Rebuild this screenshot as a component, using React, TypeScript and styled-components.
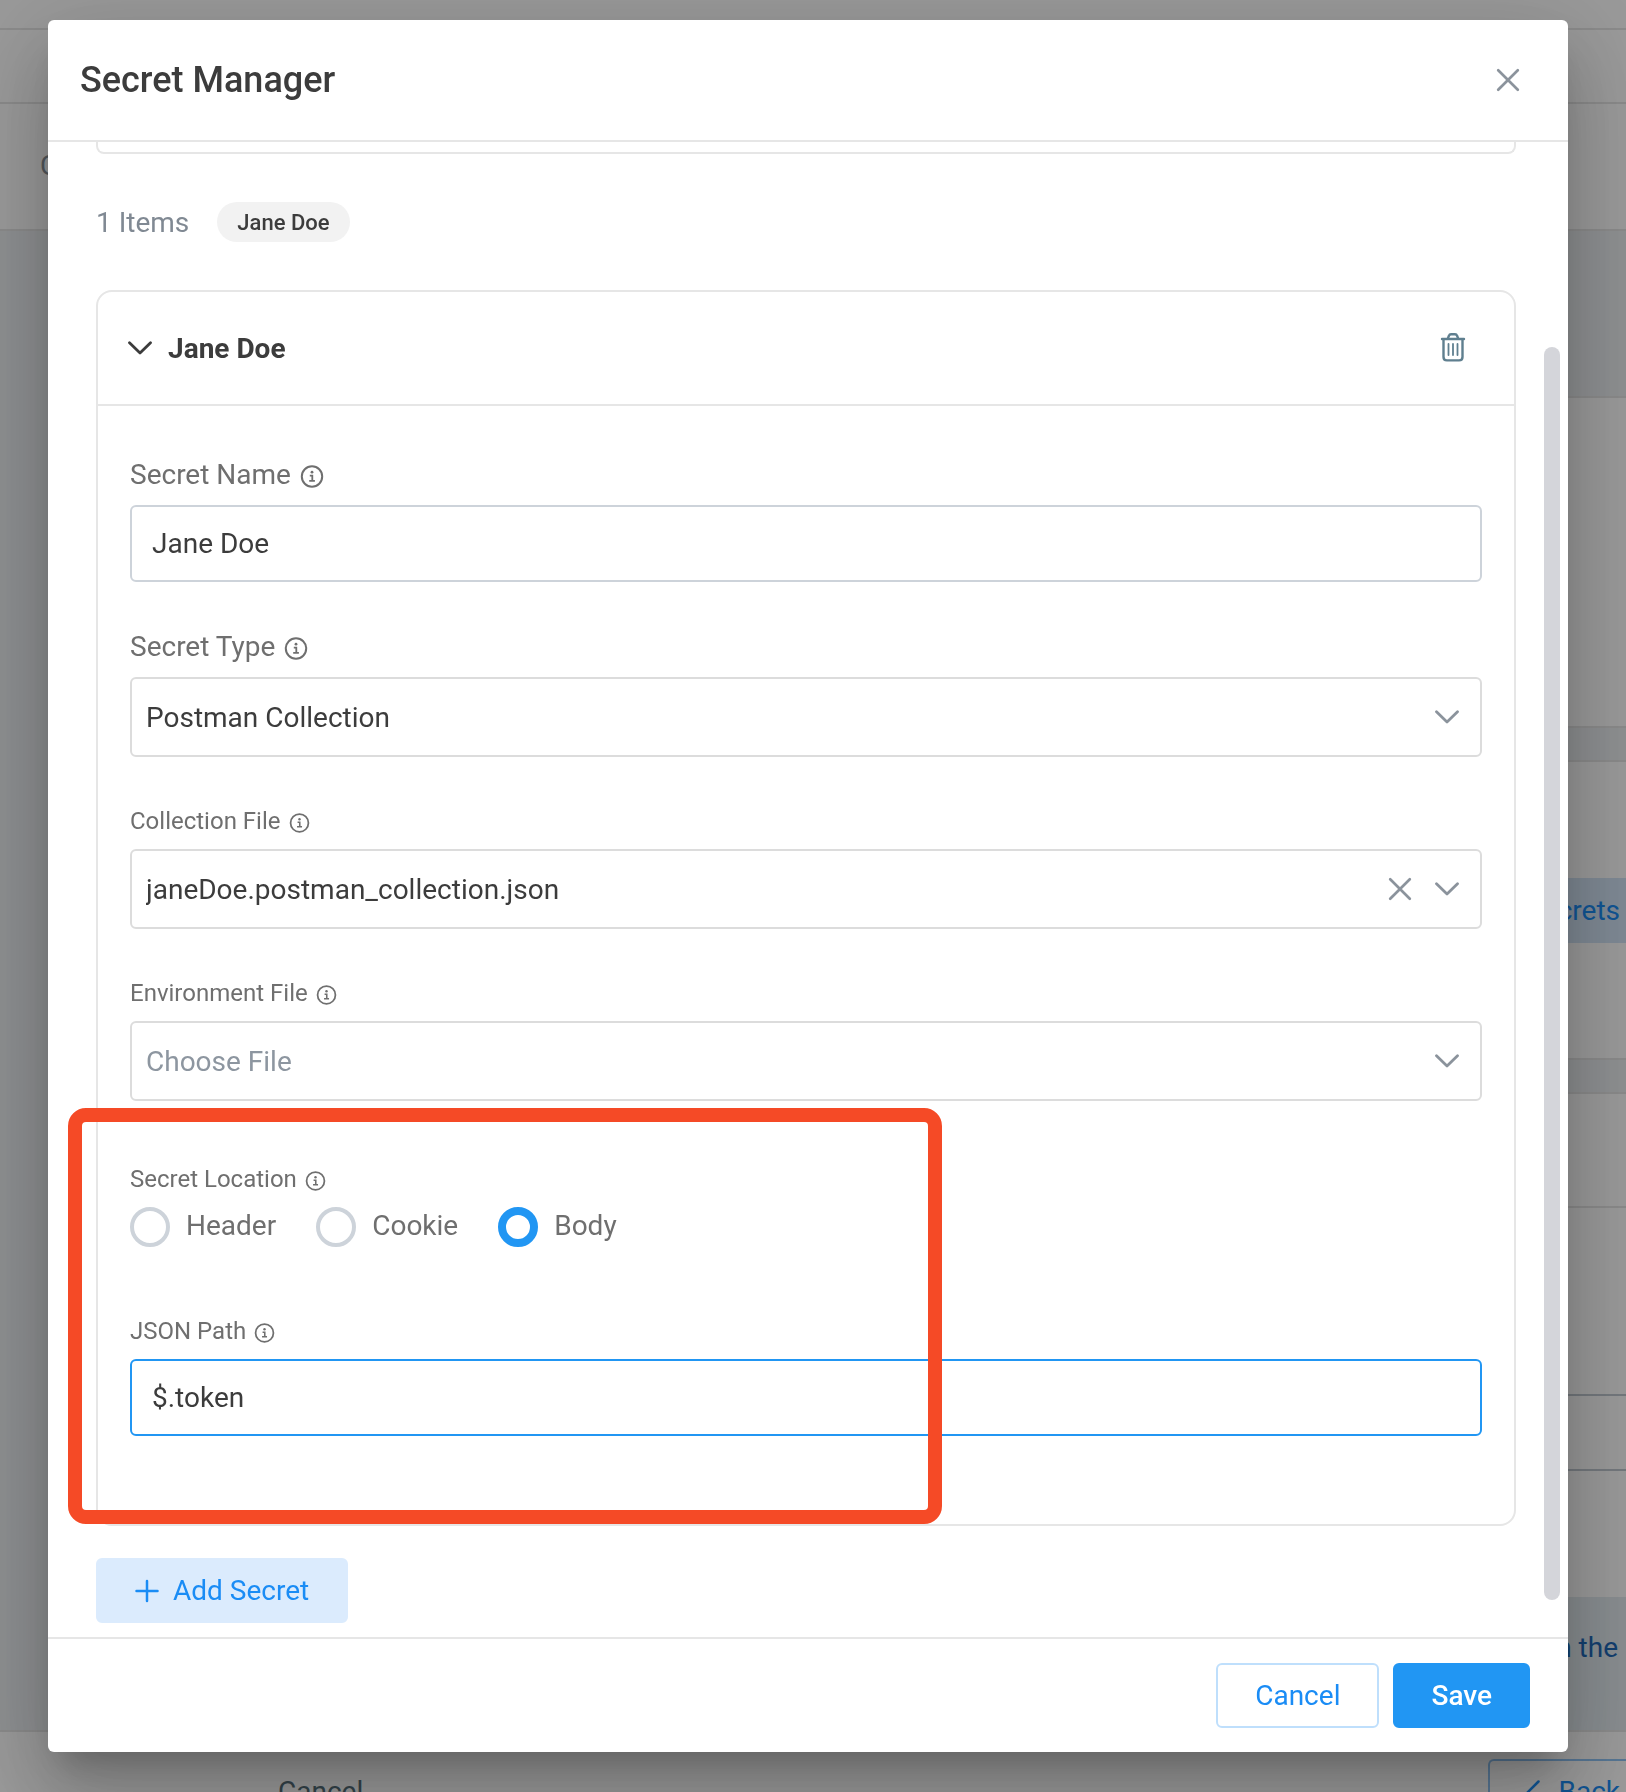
import React, { useId, useState } from "react";
import styled, { createGlobalStyle, css } from "styled-components";

const color = {
  text: "#3c3c3c",
  label: "#6f6f6f",
  muted: "#808993",
  icon: "#8b939c",
  line: "#e6e6e6",
  control: "#dcdcdc",
  input: "#cdd3da",
  blue: "#2196f3",
  link: "#1a8cf5",
  soft: "#dbebfd",
};

const GlobalStyle = createGlobalStyle`
  *, *::before, *::after { box-sizing: border-box; }
  body { margin: 0; background: #fff; }
  body, button, input, select { font-family: Roboto, "Liberation Sans", sans-serif; font-size: 28px; }
  button { cursor: pointer; }
`;

/* ---------- page behind the dialog ---------- */

const Page = styled.div`
  display: flex;
  flex-direction: column;
  height: 100vh;
  overflow: hidden;
  background: #fff;
`;

const Strip = styled.div<{ $height: number }>`
  display: flex;
  align-items: center;
  flex: none;
  height: ${(p) => p.$height}px;
  padding: 0 0 3px 40px;
  border-bottom: 2px solid ${color.line};
  color: #8a9299;
`;

const Workspace = styled.div`
  display: flex;
  flex-direction: column;
  flex: 1;
  gap: 32px;
  min-height: 0;
  padding: 165px 0 0 96px;
  background: #eceff2;
`;

const Panel = styled.section<{ $height?: number }>`
  display: flex;
  flex-direction: column;
  height: ${(p) => (p.$height ? `${p.$height}px` : "auto")};
  flex: ${(p) => (p.$height ? "none" : "1")};
  justify-content: ${(p) => (p.$height ? "center" : "flex-start")};
  border: solid ${color.line};
  border-width: 2px 0 ${(p) => (p.$height ? "2px" : "0")};
  background: #fff;
`;

const TabRow = styled.div`
  display: flex;
  justify-content: flex-end;
`;

const Tab = styled.button`
  height: 65px;
  padding: 0 6px 0 40px;
  border: 0;
  background: #d3e4f6;
  color: ${color.link};
`;

const PanelHead = styled.div`
  height: 114px;
  border-bottom: 2px solid ${color.line};
`;

const PageInput = styled.input`
  height: 77px;
  margin-top: 186px;
  border: solid #c0c8d0;
  border-width: 2px 0;
  background: transparent;
`;

const Callout = styled.p`
  display: flex;
  flex: 1;
  justify-content: flex-end;
  margin: 126px 0 0;
  padding: 35px 8px 0 0;
  line-height: 32px;
  background: #e3ebf0;
  color: #1f69b8;
`;

const PageFooter = styled.footer`
  display: flex;
  flex: none;
  justify-content: space-between;
  height: 62px;
  padding: 27px 0 0 278px;
  border-top: 2px solid ${color.line};
  overflow: hidden;
`;

const PageButton = styled.button<{ $outlined?: boolean }>`
  display: flex;
  align-items: center;
  gap: 18px;
  flex: none;
  height: 65px;
  padding: 0;
  border: 0;
  background: none;
  color: #546e7a;
  ${(p) =>
    p.$outlined &&
    css`
      padding: 0 6px 0 36px;
      border: 2px solid #90c4f5;
      border-right: 0;
      border-radius: 6px 0 0 6px;
      color: ${color.link};
    `}
`;

/* ---------- dialog shell ---------- */

const Overlay = styled.div`
  position: fixed;
  inset: 0;
  display: flex;
  padding: 20px 58px 40px 48px;
  background: rgba(0, 0, 0, 0.4);
`;

const Dialog = styled.div`
  display: flex;
  flex-direction: column;
  flex: 1;
  min-width: 0;
  border-radius: 6px;
  background: #fff;
  color: ${color.text};
  box-shadow: 0 22px 30px -14px rgba(0, 0, 0, 0.2), 0 48px 76px 6px rgba(0, 0, 0, 0.14),
    0 18px 92px 16px rgba(0, 0, 0, 0.12);
`;

const DialogHeader = styled.header`
  display: flex;
  align-items: center;
  justify-content: space-between;
  flex: none;
  height: 122px;
  padding: 0 48px 0 32px;
  border-bottom: 2px solid ${color.line};
`;

const Title = styled.h1`
  margin: 0;
  font-size: 36px;
  font-weight: 500;
  line-height: 44px;
`;

const IconButton = styled.button<{ $tint?: string }>`
  display: flex;
  padding: 0;
  border: 0;
  background: none;
  color: ${(p) => p.$tint || color.icon};
`;

const DialogBody = styled.div`
  position: relative;
  display: flex;
  flex-direction: column;
  flex: 1;
  min-height: 0;
  padding: 0 52px 0 48px;
  overflow: hidden;
`;

const ScrollThumb = styled.div`
  position: absolute;
  top: 205px;
  right: 8px;
  bottom: 37px;
  width: 16px;
  border-radius: 8px;
  background: #d4d5da;
`;

const DialogFooter = styled.footer`
  display: flex;
  align-items: center;
  justify-content: flex-end;
  flex: none;
  gap: 14px;
  height: 115px;
  padding-right: 38px;
  border-top: 2px solid ${color.line};
`;

const Button = styled.button<{ $kind: "solid" | "outline" | "soft" }>`
  display: flex;
  align-items: center;
  align-self: ${(p) => (p.$kind === "soft" ? "flex-start" : "auto")};
  flex: none;
  gap: 14px;
  height: 65px;
  padding: 0 ${(p) => (p.$kind === "solid" ? 36 : 37)}px;
  border: 2px solid
    ${(p) => ({ solid: color.blue, outline: "#bfdffc", soft: color.soft })[p.$kind]};
  border-radius: 6px;
  background: ${(p) => ({ solid: color.blue, outline: "#fff", soft: color.soft })[p.$kind]};
  color: ${(p) => (p.$kind === "solid" ? "#fff" : color.link)};
  font-weight: ${(p) => (p.$kind === "solid" ? 500 : 400)};
`;

/* ---------- dialog content ---------- */

const PreviousCard = styled.div`
  flex: none;
  height: 12px;
  border: 2px solid ${color.line};
  border-top: 0;
  border-radius: 0 0 8px 8px;
`;

const Summary = styled.div`
  display: flex;
  align-items: center;
  flex: none;
  gap: 28px;
  margin: 48px 0;
  color: ${color.muted};
`;

const Chip = styled.span`
  height: 40px;
  padding: 0 20px;
  border-radius: 20px;
  background: #f2f2f2;
  color: ${color.text};
  font-size: 22px;
  font-weight: 500;
  line-height: 42px;
`;

const Card = styled.section`
  flex: none;
  margin-bottom: 32px;
  border: 2px solid ${color.line};
  border-radius: 16px;
`;

const CardHeader = styled.div`
  display: flex;
  align-items: center;
  justify-content: space-between;
  height: 114px;
  padding: 0 48px 0 30px;
  border-bottom: 2px solid ${color.line};
`;

const CardToggle = styled.button`
  display: flex;
  align-items: center;
  gap: 16px;
  padding: 0;
  border: 0;
  background: none;
  color: ${color.text};
  font-weight: 700;
`;

const CardForm = styled.form`
  display: flex;
  flex-direction: column;
  gap: 44px;
  padding: 48px 32px 88px;
`;

const Field = styled.div`
  display: flex;
  flex-direction: column;
  gap: 8px;
`;

const LabelRow = styled.div<{ $small?: boolean }>`
  display: flex;
  align-items: center;
  gap: ${(p) => (p.$small ? 8 : 9)}px;
  padding-bottom: ${(p) => (p.$small ? 0 : 2)}px;
  color: ${color.label};
  font-size: ${(p) => (p.$small ? 24 : 28)}px;
  line-height: ${(p) => (p.$small ? 40 : 41)}px;

  svg {
    width: ${(p) => (p.$small ? 21 : 24)}px;
    height: auto;
    margin-top: 2px;
  }
`;

const TextInput = styled.input<{ $active?: boolean }>`
  width: 100%;
  height: 77px;
  padding: 0 20px;
  border: 2px solid ${(p) => (p.$active ? color.blue : color.input)};
  border-radius: 6px;
  outline: 0;
  background: #fff;
  color: ${color.text};
`;

const SelectShell = styled.div`
  display: grid;
  align-items: center;

  > * {
    grid-area: 1 / 1;
  }
`;

const Select = styled.select<{ $empty?: boolean }>`
  width: 100%;
  height: 80px;
  padding: 0 120px 0 14px;
  appearance: none;
  border: 2px solid ${color.control};
  border-radius: 6px;
  outline: 0;
  background: #fff;
  color: ${(p) => (p.$empty ? "#8d96a0" : color.text)};
`;

const SelectIcons = styled.div`
  display: flex;
  align-items: center;
  justify-self: end;
  gap: 23px;
  padding-right: 23px;
  color: ${color.icon};
  pointer-events: none;

  button {
    pointer-events: auto;
  }
`;

const HighlightGroup = styled.div`
  position: relative;
  display: flex;
  flex-direction: column;
  gap: 64px;
  padding-top: 14px;

  &::after {
    content: "";
    position: absolute;
    top: -37px;
    bottom: -88px;
    left: -62px;
    width: 874px;
    border: 14px solid #f54a26;
    border-radius: 18px;
    pointer-events: none;
  }
`;

const RadioRow = styled.div`
  display: flex;
  gap: 40px;
`;

const RadioLabel = styled.label`
  display: flex;
  align-items: flex-start;
  gap: 16px;
  color: ${color.label};
  line-height: 38px;
`;

const Radio = styled.input`
  width: 40px;
  height: 40px;
  margin: 0;
  appearance: none;
  border: 4px solid #cdd3da;
  border-radius: 50%;

  &:checked {
    border: 8px solid ${color.blue};
  }
`;

/* ---------- icons ---------- */

const CloseIcon = () => (
  <svg width="24" height="24" viewBox="0 0 24 24" fill="none" stroke="currentColor" strokeWidth="2.7" strokeLinecap="round" aria-hidden="true">
    <path d="M2.2 2.2 L21.8 21.8 M21.8 2.2 L2.2 21.8" />
  </svg>
);

const ChevronIcon = () => (
  <svg width="24" height="14" viewBox="0 0 24 14" fill="none" stroke="currentColor" strokeWidth="2.8" strokeLinecap="round" strokeLinejoin="round" aria-hidden="true">
    <path d="M1.5 1.8 L12 11.9 L22.5 1.8" />
  </svg>
);

const BackIcon = () => (
  <svg width="14" height="24" viewBox="0 0 14 24" fill="none" stroke="currentColor" strokeWidth="2.5" strokeLinecap="round" aria-hidden="true">
    <path d="M12.5 1.5 L2 12 L12.5 22.5" />
  </svg>
);

const PlusIcon = () => (
  <svg width="24" height="24" viewBox="0 0 24 24" fill="none" stroke="currentColor" strokeWidth="2.5" strokeLinecap="round" aria-hidden="true">
    <path d="M12 2 V22 M1.5 12 H22.5" />
  </svg>
);

const TrashIcon = () => (
  <svg width="26" height="32" viewBox="0 0 26 32" fill="none" stroke="currentColor" strokeWidth="2.4" strokeLinecap="round" strokeLinejoin="round" aria-hidden="true">
    <path d="M2 7 H24" />
    <path d="M7.8 6.6 L8.9 3.8 C9.3 2.7 10 2.3 11 2.3 H15 C16 2.3 16.7 2.7 17.1 3.8 L18.2 6.6" />
    <path d="M3.5 7.3 V25 Q3.5 28.4 6.9 28.4 H19.1 Q22.5 28.4 22.5 25 V7.3" />
    <path d="M8.5 12 V23 M13 12 V23 M17.5 12 V23" strokeWidth="1.8" />
  </svg>
);

const InfoIcon = () => (
  <svg viewBox="0 0 24 24" fill="none" stroke="currentColor" strokeWidth="2" aria-hidden="true">
    <circle cx="12" cy="12.5" r="10.2" />
    <circle cx="12" cy="8.2" r="1.4" fill="currentColor" stroke="none" />
    <path d="M9.8 11.7 H12.3 V16.9 M9.2 16.9 H14.9" strokeWidth="1.8" />
  </svg>
);

/* ---------- composed parts ---------- */

type SelectFieldProps = {
  label: string;
  value: string;
  small?: boolean;
  empty?: boolean;
  clearable?: boolean;
};

function SelectField({ label, value, small, empty, clearable }: SelectFieldProps) {
  const id = useId();
  return (
    <Field>
      <LabelRow $small={small}>
        <label htmlFor={id}>{label}</label>
        <InfoIcon />
      </LabelRow>
      <SelectShell>
        <Select id={id} $empty={empty} defaultValue={value}>
          <option>{value}</option>
        </Select>
        <SelectIcons>
          {clearable && (
            <IconButton type="button" aria-label="Clear">
              <CloseIcon />
            </IconButton>
          )}
          <ChevronIcon />
        </SelectIcons>
      </SelectShell>
    </Field>
  );
}

type TextFieldProps = { label: string; value: string; small?: boolean; active?: boolean };

function TextField({ label, value, small, active }: TextFieldProps) {
  const id = useId();
  return (
    <Field>
      <LabelRow $small={small}>
        <label htmlFor={id}>{label}</label>
        <InfoIcon />
      </LabelRow>
      <TextInput id={id} type="text" defaultValue={value} $active={active} />
    </Field>
  );
}

function LocationField() {
  const [location, setLocation] = useState("Body");
  const id = useId();
  return (
    <Field role="radiogroup" aria-labelledby={id}>
      <LabelRow $small>
        <span id={id}>Secret Location</span>
        <InfoIcon />
      </LabelRow>
      <RadioRow>
        {["Header", "Cookie", "Body"].map((name) => (
          <RadioLabel key={name}>
            <Radio
              type="radio"
              name="location"
              checked={location === name}
              onChange={() => setLocation(name)}
            />
            {name}
          </RadioLabel>
        ))}
      </RadioRow>
    </Field>
  );
}

function BackgroundPage() {
  return (
    <Page aria-hidden="true">
      <Strip $height={30} />
      <Strip $height={74} />
      <Strip $height={127}>C</Strip>
      <Workspace>
        <Panel $height={332} />
        <Panel $height={300}>
          <TabRow>
            <Tab type="button">Secrets</Tab>
          </TabRow>
        </Panel>
        <Panel>
          <PanelHead />
          <PageInput type="text" aria-label="Value" />
          <Callout>in the</Callout>
        </Panel>
      </Workspace>
      <PageFooter>
        <PageButton type="button">Cancel</PageButton>
        <PageButton type="button" $outlined>
          <BackIcon />
          Back
        </PageButton>
      </PageFooter>
    </Page>
  );
}

export default function App() {
  return (
    <>
      <GlobalStyle />
      <BackgroundPage />
      <Overlay>
        <Dialog role="dialog" aria-modal="true" aria-labelledby="dialog-title">
          <DialogHeader>
            <Title id="dialog-title">Secret Manager</Title>
            <IconButton type="button" aria-label="Close">
              <CloseIcon />
            </IconButton>
          </DialogHeader>
          <DialogBody>
            <PreviousCard />
            <Summary>
              <span>1 Items</span>
              <Chip>Jane Doe</Chip>
            </Summary>
            <Card>
              <CardHeader>
                <CardToggle type="button" aria-expanded="true">
                  <ChevronIcon />
                  Jane Doe
                </CardToggle>
                <IconButton type="button" aria-label="Delete secret" $tint="#5f7f8f">
                  <TrashIcon />
                </IconButton>
              </CardHeader>
              <CardForm>
                <TextField label="Secret Name" value="Jane Doe" />
                <SelectField label="Secret Type" value="Postman Collection" />
                <SelectField label="Collection File" value="janeDoe.postman_collection.json" small clearable />
                <SelectField label="Environment File" value="Choose File" small empty />
                <HighlightGroup>
                  <LocationField />
                  <TextField label="JSON Path" value="$.token" small active />
                </HighlightGroup>
              </CardForm>
            </Card>
            <Button type="button" $kind="soft">
              <PlusIcon />
              Add Secret
            </Button>
            <ScrollThumb />
          </DialogBody>
          <DialogFooter>
            <Button type="button" $kind="outline">
              Cancel
            </Button>
            <Button type="button" $kind="solid">
              Save
            </Button>
          </DialogFooter>
        </Dialog>
      </Overlay>
    </>
  );
}
